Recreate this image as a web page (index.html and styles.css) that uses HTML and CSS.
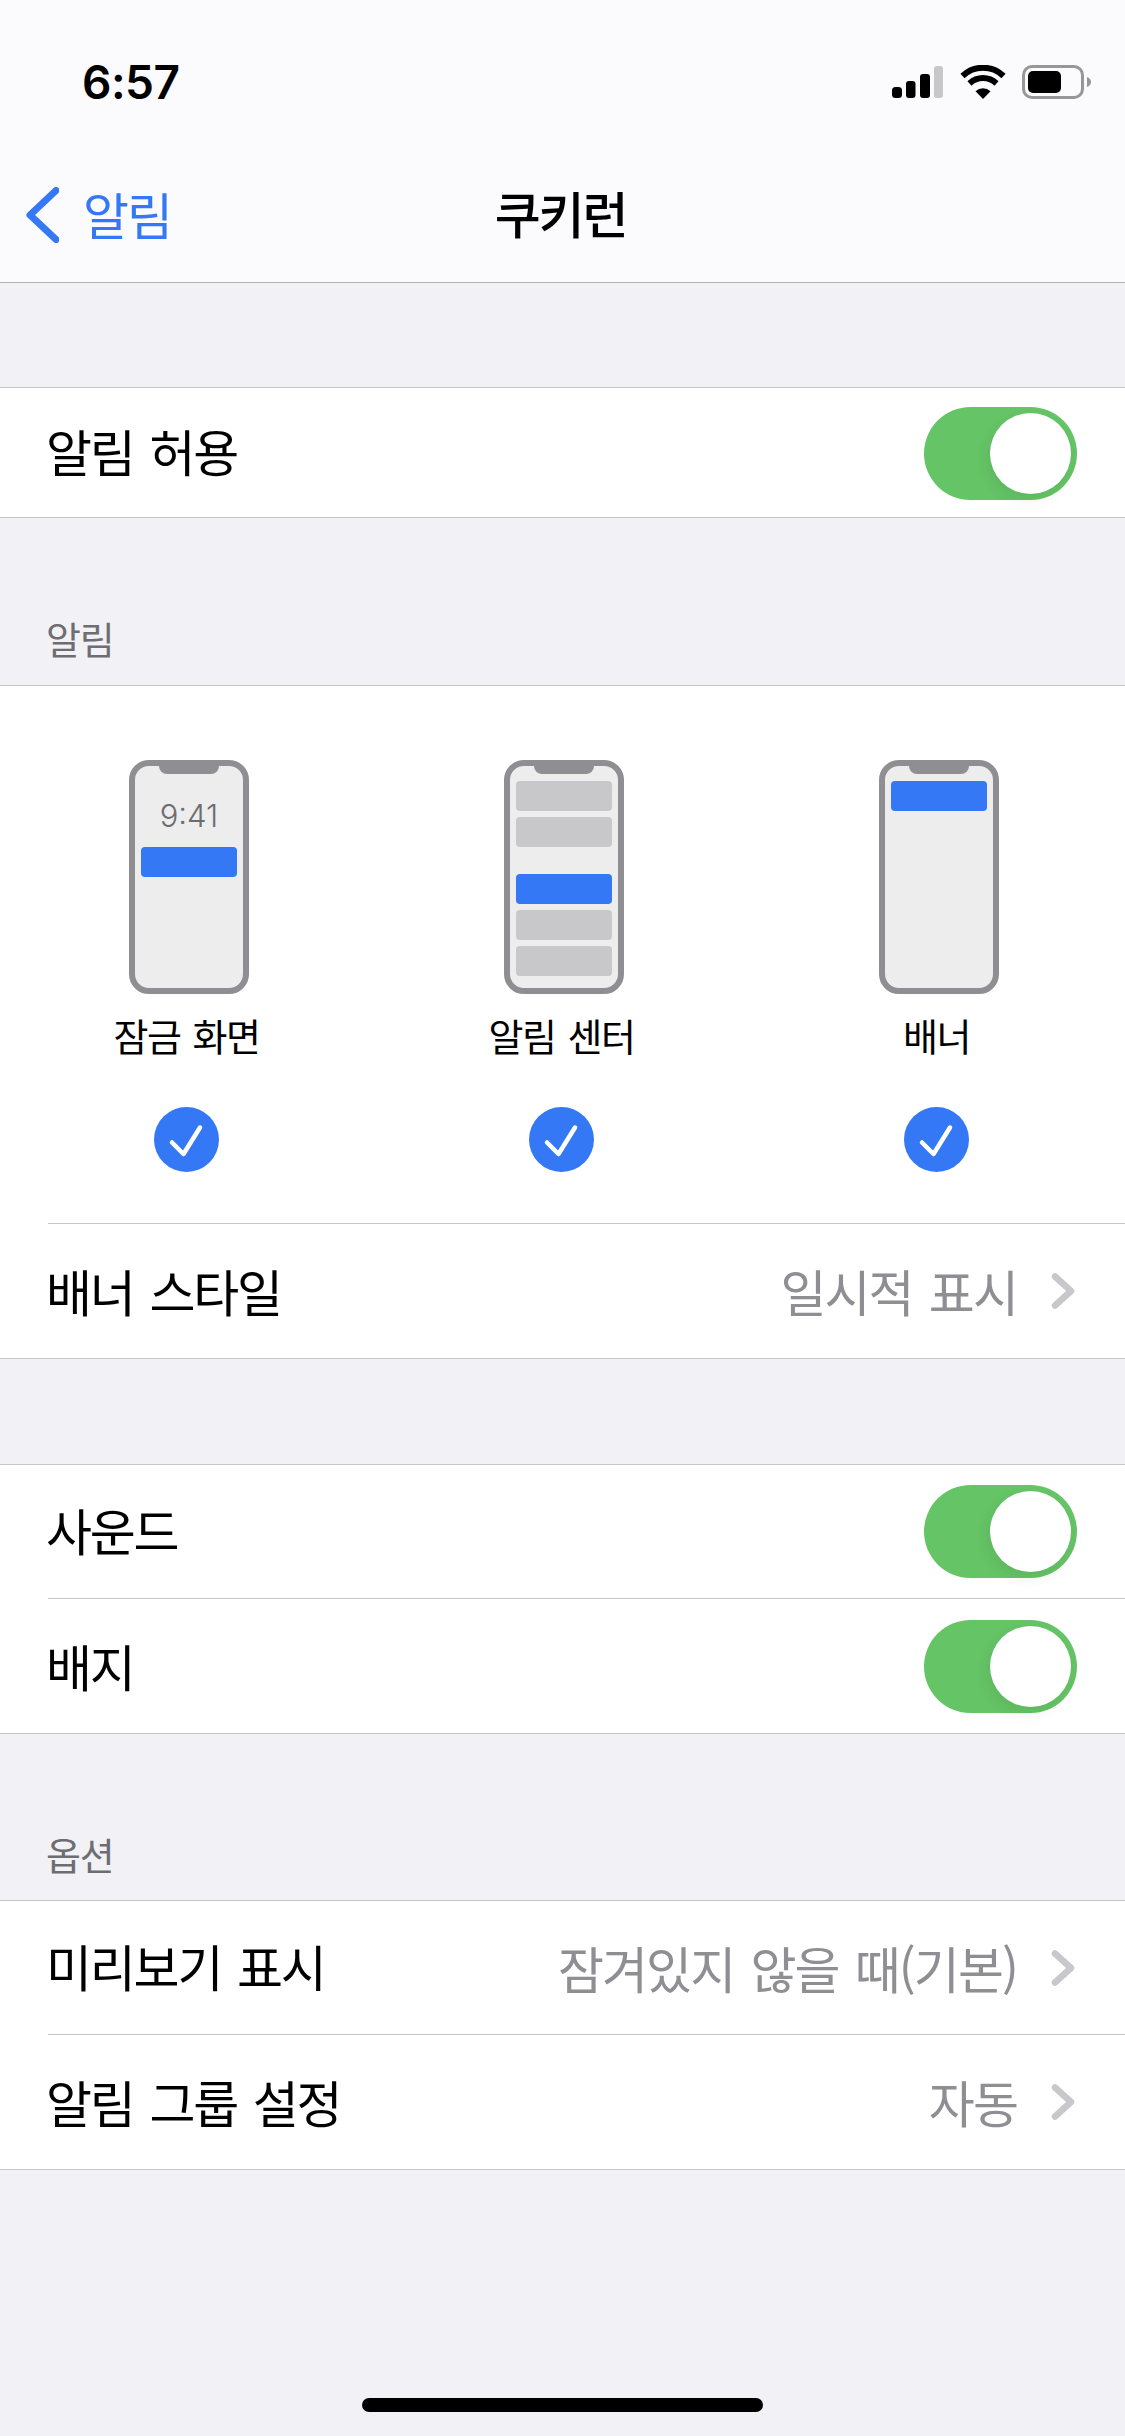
FILE: index.html
```html
<!DOCTYPE html>
<html lang="ko">
<head>
<meta charset="utf-8">
<title>쿠키런</title>
<link rel="stylesheet" href="styles.css">
</head>
<body>
<div class="app">
  <header class="top">
    <div class="status">
      <span class="time">6:57</span>
      <div class="status-icons">
        <svg class="signal" viewBox="0 0 51 32" width="51" height="32">
          <rect x="0" y="21" width="10" height="11" rx="3.5" fill="#000"/>
          <rect x="14" y="15" width="9.500" height="17" rx="3" fill="#000"/>
          <rect x="28" y="8" width="10" height="24" rx="3" fill="#000"/>
          <rect x="42" y="0" width="9" height="32" rx="3" fill="#c7c7c7"/>
        </svg>
        <svg class="wifi" viewBox="0 0 46 34" width="46" height="34">
          <path d="M23 34l-7.500-7.800a11 11 0 0 1 15 0z" fill="#000"/>
          <path d="M9.500 18.500a19.500 19.500 0 0 1 27 0" fill="none" stroke="#000" stroke-width="6"/>
          <path d="M2.500 11a29.500 29.500 0 0 1 41 0" fill="none" stroke="#000" stroke-width="6"/>
        </svg>
        <svg class="battery" viewBox="0 0 69 34" width="69" height="34">
          <rect x="1.500" y="1.500" width="59" height="31" rx="8.500" fill="none" stroke="#979797" stroke-width="3"/>
          <rect x="6" y="6" width="33" height="22" rx="5" fill="#000"/>
          <path d="M65 12c2.500.8 4 2.700 4 5s-1.500 4.200-4 5z" fill="#979797"/>
        </svg>
      </div>
    </div>
    <nav class="nav">
      <a class="back">
        <svg viewBox="0 0 33 56" width="33" height="56"><path d="M30 3.500L4 28l26 24.500" fill="none" stroke="#3478f6" stroke-width="7" stroke-linecap="round" stroke-linejoin="round"/></svg>
        <span class="back-label">알림</span>
      </a>
      <h1 class="title">쿠키런</h1>
    </nav>
  </header>

  <main class="content">
    <section class="group first">
      <div class="row short">
        <span class="row-label">알림 허용</span>
        <span class="switch"><span class="knob"></span></span>
      </div>
    </section>

    <h2 class="section-head">알림</h2>
    <section class="group">
      <div class="picker">
        <div class="option">
          <svg class="phone" viewBox="0 0 120 234" width="120" height="234">
            <use href="#phone-shell"/>
            <text class="clock" x="60" y="67" text-anchor="middle">9:41</text>
            <rect x="12" y="87" width="96" height="30" rx="4" fill="#3478f6"/>
          </svg>
          <span class="option-label">잠금 화면</span>
          <svg class="check" viewBox="0 0 65 65" width="65" height="65"><use href="#check-mark"/></svg>
        </div>
        <div class="option">
          <svg class="phone" viewBox="0 0 120 234" width="120" height="234">
            <use href="#phone-shell"/>
            <rect x="12" y="21" width="96" height="30" rx="4" fill="#c8c8ca"/>
            <rect x="12" y="57" width="96" height="30" rx="4" fill="#c8c8ca"/>
            <rect x="12" y="114" width="96" height="30" rx="4" fill="#3478f6"/>
            <rect x="12" y="150" width="96" height="30" rx="4" fill="#c8c8ca"/>
            <rect x="12" y="186" width="96" height="30" rx="4" fill="#c8c8ca"/>
          </svg>
          <span class="option-label">알림 센터</span>
          <svg class="check" viewBox="0 0 65 65" width="65" height="65"><use href="#check-mark"/></svg>
        </div>
        <div class="option">
          <svg class="phone" viewBox="0 0 120 234" width="120" height="234">
            <use href="#phone-shell"/>
            <rect x="12" y="21" width="96" height="30" rx="4" fill="#3478f6"/>
          </svg>
          <span class="option-label">배너</span>
          <svg class="check" viewBox="0 0 65 65" width="65" height="65"><use href="#check-mark"/></svg>
        </div>
      </div>
      <div class="row inset">
        <span class="row-label">배너 스타일</span>
        <span class="row-value">일시적 표시<svg class="chev" viewBox="0 0 24 36" width="24" height="36"><use href="#chevron"/></svg></span>
      </div>
    </section>

    <section class="group spaced">
      <div class="row">
        <span class="row-label">사운드</span>
        <span class="switch"><span class="knob"></span></span>
      </div>
      <div class="row inset">
        <span class="row-label">배지</span>
        <span class="switch"><span class="knob"></span></span>
      </div>
    </section>

    <h2 class="section-head last">옵션</h2>
    <section class="group">
      <div class="row">
        <span class="row-label">미리보기 표시</span>
        <span class="row-value">잠겨있지 않을 때(기본)<svg class="chev" viewBox="0 0 24 36" width="24" height="36"><use href="#chevron"/></svg></span>
      </div>
      <div class="row inset">
        <span class="row-label">알림 그룹 설정</span>
        <span class="row-value">자동<svg class="chev" viewBox="0 0 24 36" width="24" height="36"><use href="#chevron"/></svg></span>
      </div>
    </section>
  </main>

  <div class="home-indicator"></div>
</div>

<svg class="defs" width="0" height="0" aria-hidden="true">
  <defs>
    <g id="phone-shell">
      <rect x="3" y="3" width="114" height="228" rx="17" fill="#ededed" stroke="#8e8e93" stroke-width="6"/>
      <path d="M30 3h60v3a8 8 0 0 1-8 8H38a8 8 0 0 1-8-8z" fill="#8e8e93"/>
    </g>
    <g id="check-mark">
      <circle cx="32.500" cy="32.500" r="32.500" fill="#3478f6"/>
      <path d="M18 35.500L29.500 47L46 20.500" fill="none" stroke="#fff" stroke-width="4.500" stroke-linecap="round" stroke-linejoin="round"/>
    </g>
    <path id="chevron" d="M4 3.500L20 18L4 32.500" fill="none" stroke="#c7c7cc" stroke-width="6.500" stroke-linecap="round" stroke-linejoin="round"/>
  </defs>
</svg>
</body>
</html>
```

FILE: styles.css
```css
* { box-sizing: border-box; }
html, body { margin: 0; padding: 0; }
body {
  width: 1125px;
  height: 2436px;
  overflow: hidden;
  background: #f1f1f6;
  font-family: "Noto Sans CJK KR", "Noto Sans", sans-serif;
  color: #000;
}
.app { display: flex; flex-direction: column; height: 2436px; }
.top {
  height: 283px;
  background: #fbfbfd;
  border-bottom: 1px solid #b2b2b2;
  flex: none;
}
.status {
  height: 132px;
  display: flex;
  justify-content: space-between;
  align-items: flex-start;
  padding: 65px 34px 0 82px;
}
.time {
  font-family: Inter, "Liberation Sans", sans-serif;
  font-weight: 600;
  font-size: 46px;
  line-height: 34px;
  letter-spacing: -0.5px;
}
.status-icons { display: flex; align-items: flex-end; height: 34px; }
.signal { margin-right: 17px; margin-bottom: 1px; }
.wifi { margin-right: 16px; }
.nav {
  height: 150px;
  position: relative;
  display: flex;
  align-items: center;
  justify-content: center;
  padding-bottom: 22px;
}
.back {
  position: absolute;
  left: 26px;
  top: 55px;
  display: flex;
  align-items: center;
  gap: 24px;
}
.back svg { display: block; }
.back-label {
  color: #3478f6;
  font-size: 50px;
  line-height: 56px;
  letter-spacing: -2px;
  transform: translateY(-2px);
}
.title {
  margin: 0;
  font-size: 50px;
  font-weight: 500;
  line-height: 56px;
  letter-spacing: -2.2px;
  transform: translate(-2px, 16px);
}
.group {
  background: #fff;
  border-top: 1px solid #c6c6c8;
  border-bottom: 1px solid #c6c6c8;
}
.group.first { margin-top: 104px; }
.group.spaced { margin-top: 105px; }
.row {
  height: 133px;
  display: flex;
  align-items: center;
  justify-content: space-between;
  padding: 0 48px;
  position: relative;
}
.row.short { height: 129px; }
.row.short .switch { top: 1px; }
.row.inset::before {
  content: "";
  position: absolute;
  left: 48px;
  right: 0;
  top: 0;
  height: 1px;
  background: #c6c6c8;
}
.row.inset { height: 135px; }
.row.inset .switch { top: 1px; }
.row.inset .row-label { transform: translateY(-1px); }
.row-label {
  font-size: 50px;
  letter-spacing: -2.2px;
  word-spacing: 4px;
  line-height: 60px;
  margin-left: -2px;
  transform: translateY(-3px);
}
.row-value {
  display: flex;
  align-items: center;
  color: #8e8e93;
  font-size: 50px;
  letter-spacing: -1.9px;
  word-spacing: 4px;
  line-height: 60px;
  margin-right: 2px;
  transform: translateY(-1px);
}
.chev { margin-left: 34px; flex: none; transform: translateY(1px); }
.switch {
  width: 153px;
  height: 93px;
  border-radius: 47px;
  background: #65c466;
  position: relative;
  flex: none;
}
.knob {
  position: absolute;
  right: 6px;
  top: 6px;
  width: 81px;
  height: 81px;
  border-radius: 50%;
  background: #fff;
  box-shadow: -3px 6px 14px rgba(0, 0, 0, 0.07);
}
.section-head {
  margin: 0;
  height: 167px;
  padding: 96px 46px 0;
  font-size: 38px;
  font-weight: 400;
  line-height: 48px;
  letter-spacing: -1.3px;
  color: #6d6d72;
}
.section-head.last { height: 166px; }
.picker {
  display: grid;
  grid-template-columns: repeat(3, 375px);
  height: 537px;
  padding-top: 74px;
}
.option { display: flex; flex-direction: column; align-items: center; }
.phone { display: block; margin-left: 3px; flex: none; }
.clock {
  font-family: Inter, "Liberation Sans", sans-serif;
  font-size: 31px;
  font-weight: 300;
  fill: #6c6c70;
}
.option-label {
  margin-top: 15px;
  margin-left: -2px;
  font-size: 38px;
  line-height: 52px;
  letter-spacing: -1.5px;
  word-spacing: 3px;
}
.check { display: block; margin-top: 46px; margin-left: -2px; flex: none; }
.home-indicator {
  margin: auto auto 24px;
  width: 401px;
  height: 14px;
  border-radius: 7px;
  background: #000;
  flex: none;
}
.defs { position: absolute; }
```
